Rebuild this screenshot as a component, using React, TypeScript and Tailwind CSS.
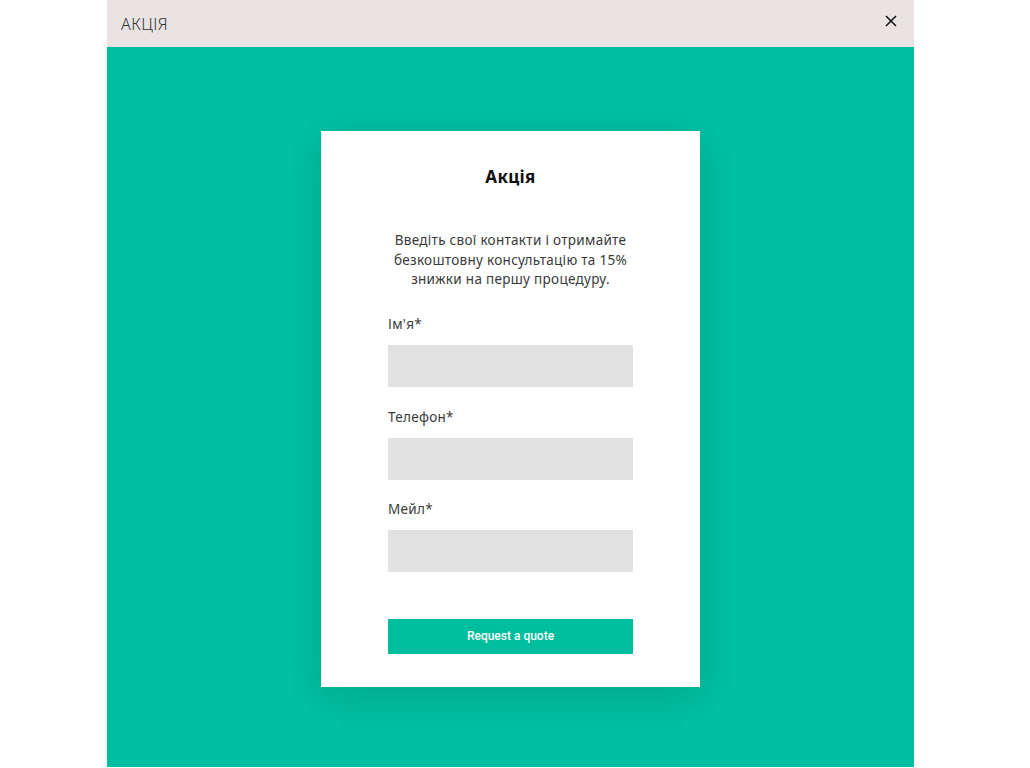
import React from "react";

export default function App() {
  const font = { fontFamily: '"Noto Sans", "DejaVu Sans", sans-serif' };
  return (
    <div className="min-h-[768px] w-full bg-white" style={font}>
      <div className="ml-[107px] flex w-[807px] flex-col">
        <div className="flex h-[47px] items-center justify-between bg-[#e9e4e3] pl-[14px] pr-[14px]">
          <span className="text-[16px] font-light tracking-[0.5px] text-[#333]">АКЦІЯ</span>
          <svg width="12" height="12" viewBox="0 0 12 12" className="mb-[6px] mr-[3px]">
            <path d="M1 1 L11 11 M11 1 L1 11" stroke="#111" strokeWidth="1.5" />
          </svg>
        </div>
        <div className="flex h-[720px] justify-center bg-[#00bfa1] pt-[84px]">
          <div className="flex h-[556px] w-[379px] flex-col items-center bg-white px-[67px] pt-[34px] shadow-[0_10px_40px_rgba(0,0,0,0.12)]">
            <h2 className="text-[17px] font-bold leading-[24px] tracking-[0.3px] text-[#111]">Акція</h2>
            <p className="mt-[42px] text-center text-[13.5px] leading-[19.5px] tracking-[0.3px] text-[#3a3a3a]">
              Введіть свої контакти і отримайте безкоштовну консультацію та 15% знижки на першу процедуру.
            </p>
            <div className="mt-[24px] flex w-full flex-col">
              <label className="text-[13.5px] leading-[20px] tracking-[0.3px] text-[#3a3a3a]">Ім'я*</label>
              <div className="mt-[11px] h-[42px] w-full bg-[#e1e1e1]" />
              <label className="mt-[20px] text-[13.5px] leading-[20px] tracking-[0.3px] text-[#3a3a3a]">Телефон*</label>
              <div className="mt-[11px] h-[42px] w-full bg-[#e1e1e1]" />
              <label className="mt-[19px] text-[13.5px] leading-[20px] tracking-[0.3px] text-[#3a3a3a]">Мейл*</label>
              <div className="mt-[11px] h-[42px] w-full bg-[#e1e1e1]" />
              <button
                className="mt-[47px] flex h-[35px] w-full items-center justify-center bg-[#00bd9d] text-[12px] font-medium text-white"
                style={{ fontFamily: 'Roboto, sans-serif' }}
              >
                Request a quote
              </button>
            </div>
          </div>
        </div>
      </div>
    </div>
  );
}
